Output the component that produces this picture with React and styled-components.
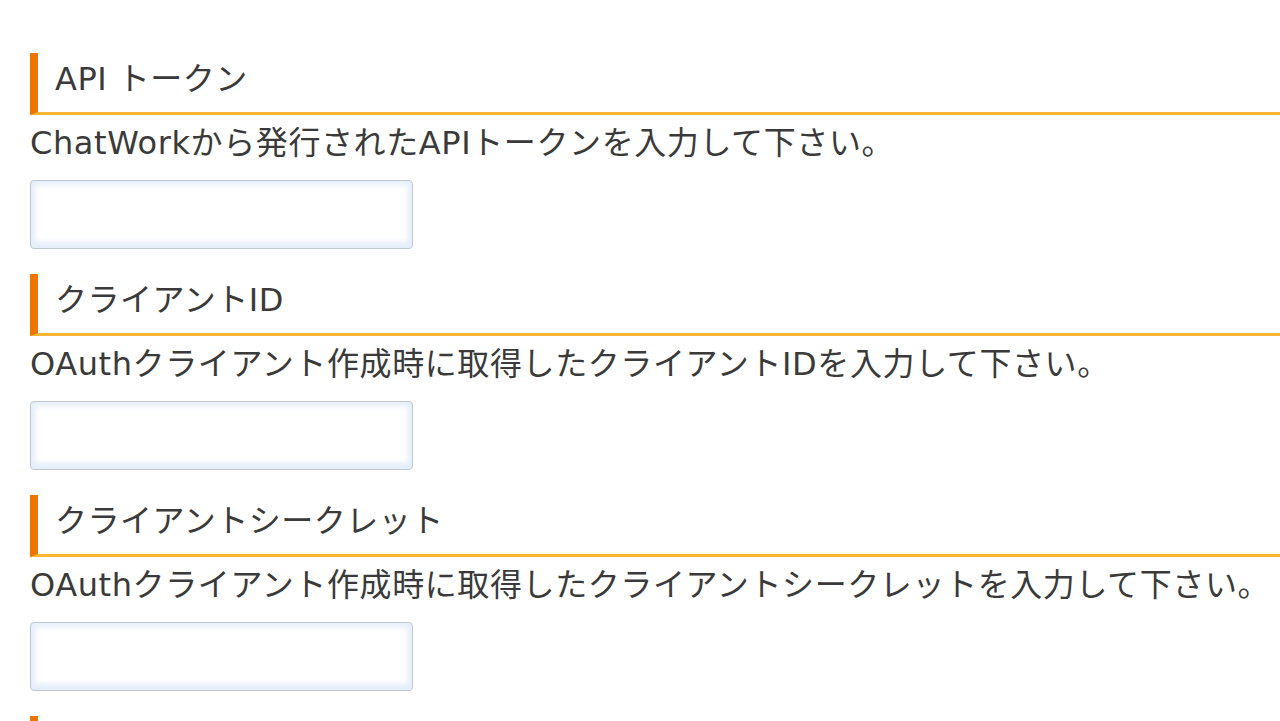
import styled, { createGlobalStyle } from 'styled-components';

const GlobalStyle = createGlobalStyle`
  html, body {
    margin: 0;
    padding: 0;
    background: #fff;
    overflow: hidden;
  }
  body {
    font-family: "DejaVu Sans", "Noto Sans CJK JP", sans-serif;
    color: #3a3a3a;
  }
`;

const Page = styled.div`
  padding: 53px 0 0 30px;
`;

const Section = styled.section`
  margin-bottom: 25px;
`;

const Heading = styled.h2`
  margin: 0;
  min-height: 50px;
  padding: 1px 0 8px 17px;
  border-left: 8px solid #ef7400;
  border-bottom: 3px solid #fcb634;
  font-size: 32px;
  font-weight: normal;
  line-height: 50px;
  letter-spacing: 0.5px;
  color: #3a3a3a;
`;

const Description = styled.p`
  margin: 4px 0 13px;
  font-size: 32px;
  line-height: 48px;
  letter-spacing: 0.6px;
  white-space: nowrap;
`;

const Field = styled.input`
  display: block;
  box-sizing: border-box;
  width: 383px;
  height: 69px;
  margin: 0;
  padding: 0 12px;
  border: 1px solid #bfc7cf;
  border-radius: 4px;
  background: #fff;
  box-shadow: inset 0 0 6px 4px #e4eefa, inset 0 -5px 6px #e6f0fb;
  font-size: 26px;
  outline: none;
`;

const fields = [
  {
    title: 'API トークン',
    help: 'ChatWorkから発行されたAPIトークンを入力して下さい。',
  },
  {
    title: 'クライアントID',
    help: 'OAuthクライアント作成時に取得したクライアントIDを入力して下さい。',
  },
  {
    title: 'クライアントシークレット',
    help: 'OAuthクライアント作成時に取得したクライアントシークレットを入力して下さい。',
  },
];

export default function App() {
  return (
    <Page>
      <GlobalStyle />
      {fields.map((f) => (
        <Section key={f.title}>
          <Heading>{f.title}</Heading>
          <Description>{f.help}</Description>
          <Field type="text" aria-label={f.title} />
        </Section>
      ))}
      {/* next section starts just below the fold */}
      <Heading />
    </Page>
  );
}
